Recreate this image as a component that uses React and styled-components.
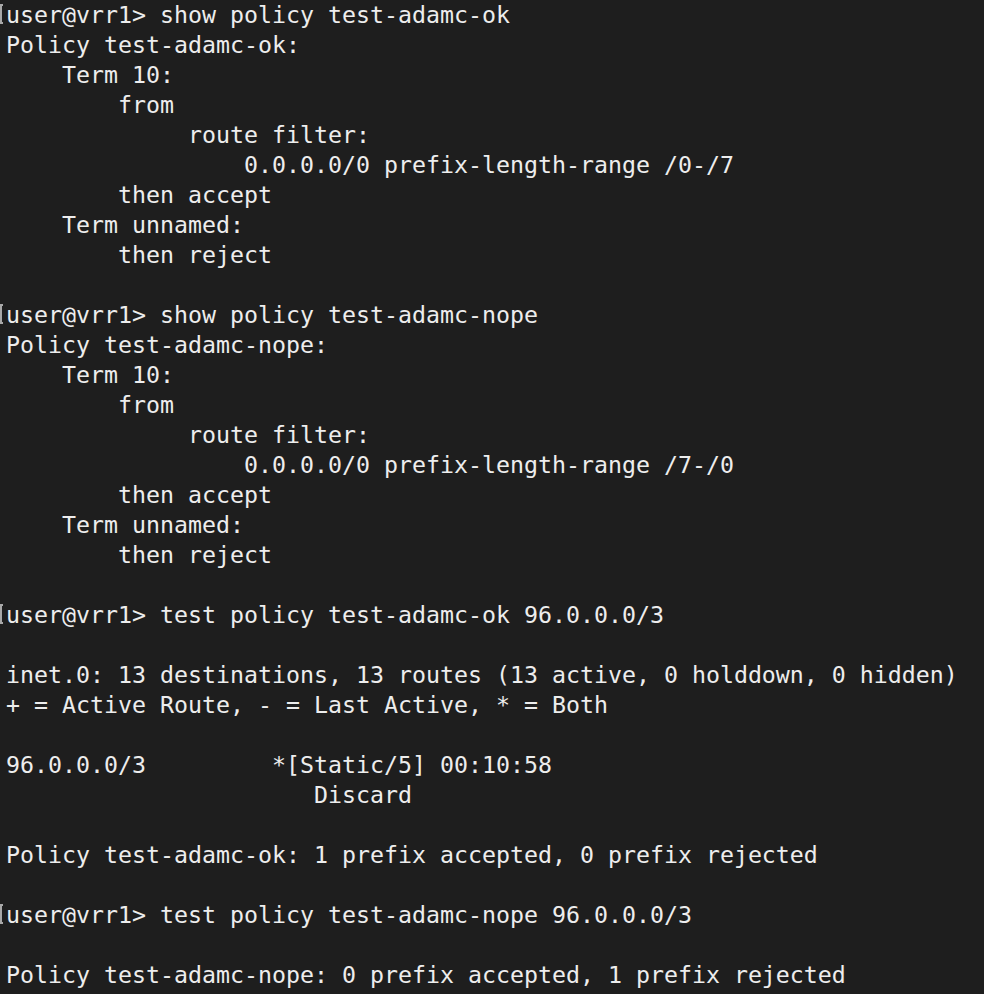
import React from "react";
import styled, { createGlobalStyle } from "styled-components";

const Global = createGlobalStyle`
  html, body { margin: 0; padding: 0; background: #1e1e1e; }
  #root { min-height: 100vh; background: #1e1e1e; }
`;

const Terminal = styled.div`
  background: #1e1e1e;
  color: #ededed;
  font-family: "DejaVu Sans Mono", "Liberation Mono", monospace;
  font-size: 23.26px;
  width: 984px;
  height: 994px;
  overflow: hidden;
  padding: 0;
  box-sizing: border-box;
`;

const Line = styled.div`
  display: flex;
  align-items: center;
  height: 30px;
  line-height: 30px;
  padding-left: 6px;
  white-space: pre;
`;

const Mark = styled.span`
  display: block;
  width: 3px;
  height: 20px;
  margin-left: -6px;
  margin-right: 3px;
  border-left: 2px solid #a8a8a8;
  border-top: 2px solid #a8a8a8;
  border-bottom: 2px solid #a8a8a8;
  box-sizing: border-box;
  margin-top: -2px;
`;

const lines = [
  { p: true, t: "user@vrr1> show policy test-adamc-ok" },
  { t: "Policy test-adamc-ok:" },
  { t: "    Term 10:" },
  { t: "        from" },
  { t: "             route filter:" },
  { t: "                 0.0.0.0/0 prefix-length-range /0-/7" },
  { t: "        then accept" },
  { t: "    Term unnamed:" },
  { t: "        then reject" },
  { t: "" },
  { p: true, t: "user@vrr1> show policy test-adamc-nope" },
  { t: "Policy test-adamc-nope:" },
  { t: "    Term 10:" },
  { t: "        from" },
  { t: "             route filter:" },
  { t: "                 0.0.0.0/0 prefix-length-range /7-/0" },
  { t: "        then accept" },
  { t: "    Term unnamed:" },
  { t: "        then reject" },
  { t: "" },
  { p: true, t: "user@vrr1> test policy test-adamc-ok 96.0.0.0/3" },
  { t: "" },
  { t: "inet.0: 13 destinations, 13 routes (13 active, 0 holddown, 0 hidden)" },
  { t: "+ = Active Route, - = Last Active, * = Both" },
  { t: "" },
  { t: "96.0.0.0/3         *[Static/5] 00:10:58" },
  { t: "                      Discard" },
  { t: "" },
  { t: "Policy test-adamc-ok: 1 prefix accepted, 0 prefix rejected" },
  { t: "" },
  { p: true, t: "user@vrr1> test policy test-adamc-nope 96.0.0.0/3" },
  { t: "" },
  { t: "Policy test-adamc-nope: 0 prefix accepted, 1 prefix rejected" },
];

export default function App() {
  return (
    <>
      <Global />
      <Terminal>
        {lines.map((l, i) => (
          <Line key={i}>
            {l.p && <Mark />}
            {l.t}
          </Line>
        ))}
      </Terminal>
    </>
  );
}
